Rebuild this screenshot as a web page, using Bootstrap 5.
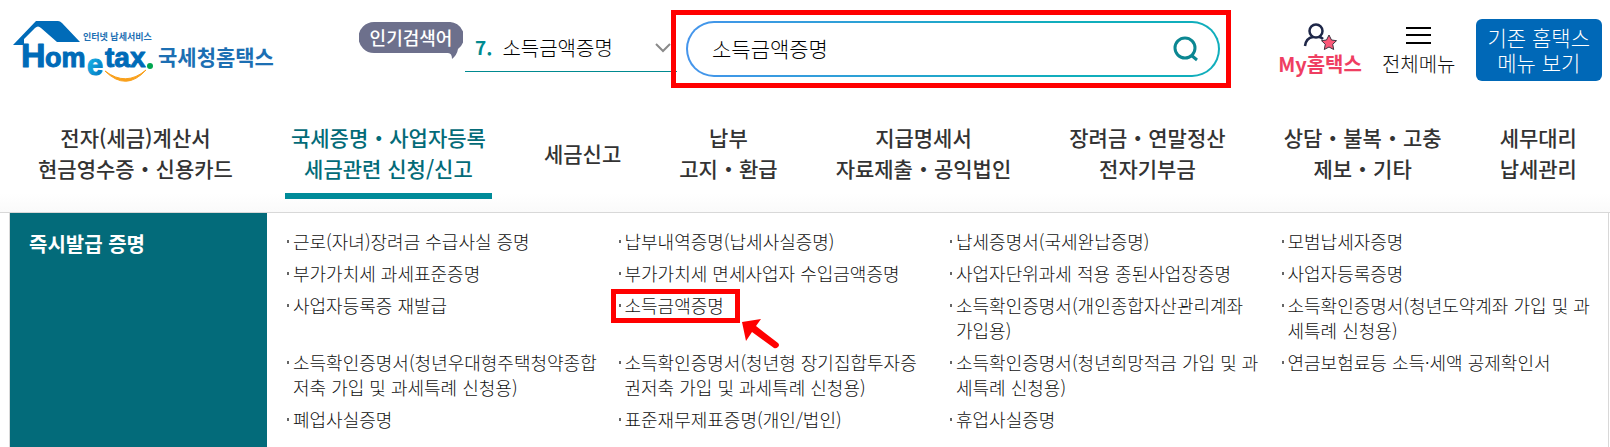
<!DOCTYPE html>
<html lang="ko">
<head>
<meta charset="utf-8">
<meta name="viewport" content="width=device-width, initial-scale=1">
<title>국세청 홈택스</title>
<link href="https://cdn.jsdelivr.net/npm/bootstrap@5.3.0/dist/css/bootstrap.min.css" rel="stylesheet">
<style>
  body { font-family: "Noto Sans CJK KR", sans-serif; color: #333; background: #fff; }
  a, a:hover { color: inherit; text-decoration: none; }

  .site-head { padding: 10px 8px 0 12px; }
  .logo { margin-right: 83px; margin-top: 8px; }
  .popular-tag { width: 104px; height: 38px; margin-top: 12px; color: #fff; font-size: 18px; line-height: 30px; font-weight: 500; text-align: center; }
  .popular-tag svg { position: absolute; inset: 0; z-index: -1; }
  .keyword { width: 212px; height: 62px; margin: 0 -6px 0 2px; padding: 14px 3px 0 10px; border: 0; border-bottom: 1px solid #008a90; background: none; font-size: 20px; font-weight: 300; color: #000; }
  .keyword b { color: #008a90; font-size: 19px; font-weight: 700; margin-right: 10px; }
  .marked { border: 5px solid #f00; }
  .search-mark { padding: 6px; padding-left: 10px; z-index: 1; min-width: 300px; }
  .search-pill { height: 56px; border: 2px solid transparent; border-radius: 28px; padding: 0 19px 0 22px;
    background: linear-gradient(#fff, #fff) padding-box, linear-gradient(90deg, #4595ec, #10aebc 70%) border-box; }
  .search-pill input { border: 0; outline: 0; background: none; font-size: 21px; font-weight: 300; color: #000; min-width: 0; }
  .search-pill button { border: 0; background: none; padding: 0; }
  .quick { font-size: 20px; line-height: 24px; margin-top: 13px; font-weight: 300; color: #111; }
  .quick svg { display: block; margin: 0 auto; }
  .my-link, .my-link:hover { color: #ef3e62; font-weight: 700; }
  .old-btn, .old-btn:hover { background: #0068b7; color: #fff; border: 0; border-radius: 6px; padding: 6px 12px; font-size: 21px; line-height: 25px; margin-top: 9px; font-weight: 300; }
  .gap-l { margin-left: 47px; }
  .gap-m { margin-left: 20px; }

  .main-menu { padding: 31px 27px 13px 32px; border-bottom: 1px solid #d8d8d8; background: linear-gradient(#fff 85%, #fafafa); font-size: 21px; line-height: 31px; font-weight: 500; }
  .main-menu a { display: flex; align-items: center; text-align: center; padding: 0 6px 6px; border-bottom: 6px solid transparent; height: 80px; white-space: nowrap; }
  .main-menu a.active { color: #036b78; border-color: #008b99; }

  .panel { margin: 0 1px 0 9px; border: 1px solid #d8d8d8; border-width: 0 1px; }
  .panel-side { width: 257px; background: #036b7a; color: #fff; font-size: 20px; line-height: 30px; padding: 16px 19px; font-weight: 700; margin: 0; }
  .cert-list { display: grid; grid-template-columns: repeat(4, 1fr); gap: 7px 20px; margin: 0; padding: 16px 15px 12px 20px; list-style: none; font-size: 18px; line-height: 25px; font-weight: 300; color: #111; }
  .cert-list li { position: relative; padding-left: 6px; word-break: break-all; }
  .cert-list li::before { content: ""; position: absolute; left: 0; top: 11px; width: 2px; height: 3px; background: #666; }
  .item-mark { position: absolute; left: -8px; top: -4px; width: 129px; height: 34px; }
  .item-arrow { position: absolute; left: 123px; top: 26px; }
</style>
</head>
<body class="min-vh-100 d-flex flex-column">
<header class="site-head d-flex align-items-start">
  <a class="logo flex-shrink-0" href="#" aria-label="홈택스">
    <svg class="d-block" width="264" height="66" viewBox="12 18 264 66">
      <defs><linearGradient id="eg" x1="0" y1="0" x2="1" y2="1"><stop offset="0" stop-color="#19c5f2"/><stop offset="1" stop-color="#006bb8"/></linearGradient></defs>
      <path d="M36 21h22q2 0 4 2l18 19H57L41 28q-3-3-6 0L24 39v6H13z" fill="#006bb8"/>
      <g font-family="'Liberation Sans',sans-serif" font-weight="700" fill="#006bb8" stroke="#006bb8" stroke-linejoin="round">
        <text x="21" y="67" font-size="34">H</text>
        <text x="45" y="67" font-size="27">om</text>
        <text x="105" y="67" font-size="28">tax</text>
        <text x="87" y="75" font-size="29" fill="url(#eg)" stroke="url(#eg)">e</text>
      </g>
      <circle cx="150" cy="66" r="3" fill="#00a650"/>
      <path d="M105 71q21 16 41-1q-20 22-41 1z" fill="#f9a01b" stroke="#f9a01b"/>
      <g font-family="'Noto Sans CJK KR',sans-serif" fill="#1c6fb3" font-weight="700">
        <text x="83" y="40" font-size="9">인터넷 납세서비스</text>
        <text x="158" y="65" font-size="21">국세청홈택스</text>
      </g>
    </svg>
  </a>
  <span class="popular-tag position-relative z-0 flex-shrink-0">
    <svg width="104" height="38" viewBox="0 0 104 38" aria-hidden="true"><path d="M15 0h74a15 15 0 0 1 10 27q-1 6-6 10q0-6-4-6H15a15 15 0 0 1 0-31z" fill="#6d708c"/></svg>
    인기검색어
  </span>
  <button class="keyword d-flex align-items-center flex-shrink-0" type="button"><b>7.</b>소득금액증명
    <svg class="ms-auto" width="20" height="12" viewBox="0 0 20 12" fill="none" stroke="#8a8a8a" stroke-width="2" aria-hidden="true"><path d="M2 2l7 7 7-7"/></svg>
  </button>
  <div class="marked search-mark flex-grow-1 position-relative">
    <form class="search-pill d-flex align-items-center" role="search">
      <input class="flex-grow-1" type="text" value="소득금액증명" aria-label="검색어">
      <button type="submit" aria-label="검색"><svg class="d-block" width="28" height="28" viewBox="0 0 28 28" fill="none" stroke="#0b8792" stroke-width="3"><circle cx="14" cy="13" r="10"/><path d="M20 20l6 5"/></svg></button>
    </form>
  </div>
  <a class="quick my-link gap-l text-center flex-shrink-0" href="#">
    <svg width="34" height="29" viewBox="0 0 34 29" fill="none"><g stroke="#1e2748" stroke-width="2.500"><circle cx="13" cy="8" r="6.500"/><path d="M2 23q1-8 8-9M16 14q2 0 4 2"/></g><path d="M26 12l2.500 5 5 .700-3.800 3.600 1 5.200-4.700-2.500-4.700 2.500 1-5.200-3.800-3.600 5-.700z" fill="#fb5878" stroke="#3e3340"/></svg>
    My홈택스</a>
  <a class="quick gap-m text-center flex-shrink-0" href="#">
    <svg width="25" height="29" viewBox="0 0 25 29" stroke="#000" stroke-width="2"><path d="M0 5h25M0 12h25M0 20h25"/></svg>
    전체메뉴</a>
  <button class="btn old-btn gap-m flex-shrink-0" type="button">기존 홈택스<br>메뉴 보기</button>
</header>

<nav class="main-menu d-flex justify-content-between">
  <a href="#">전자(세금)계산서<br>현금영수증・신용카드</a>
  <a href="#" class="active">국세증명・사업자등록<br>세금관련 신청/신고</a>
  <a href="#">세금신고</a>
  <a href="#">납부<br>고지・환급</a>
  <a href="#">지급명세서<br>자료제출・공익법인</a>
  <a href="#">장려금・연말정산<br>전자기부금</a>
  <a href="#">상담・불복・고충<br>제보・기타</a>
  <a href="#">세무대리<br>납세관리</a>
</nav>

<main class="panel d-flex flex-grow-1">
  <h2 class="panel-side flex-shrink-0">즉시발급 증명</h2>
  <ul class="cert-list flex-grow-1 align-content-start">
    <li><a href="#">근로(자녀)장려금 수급사실 증명</a></li>
    <li><a href="#">납부내역증명(납세사실증명)</a></li>
    <li><a href="#">납세증명서(국세완납증명)</a></li>
    <li><a href="#">모범납세자증명</a></li>
    <li><a href="#">부가가치세 과세표준증명</a></li>
    <li><a href="#">부가가치세 면세사업자 수입금액증명</a></li>
    <li><a href="#">사업자단위과세 적용 종된사업장증명</a></li>
    <li><a href="#">사업자등록증명</a></li>
    <li><a href="#">사업자등록증 재발급</a></li>
    <li><a href="#">소득금액증명</a>
      <span class="marked item-mark"></span>
      <svg class="item-arrow" width="40" height="32" viewBox="0 0 40 32" aria-hidden="true"><path d="M0 3l19-3-5 7 22 17q2 2 0 4t-4 1L10 13l-6 9z" fill="#f00"/></svg>
    </li>
    <li><a href="#">소득확인증명서(개인종합자산관리계좌 가입용)</a></li>
    <li><a href="#">소득확인증명서(청년도약계좌 가입 및 과세특례 신청용)</a></li>
    <li><a href="#">소득확인증명서(청년우대형주택청약종합저축 가입 및 과세특례 신청용)</a></li>
    <li><a href="#">소득확인증명서(청년형 장기집합투자증권저축 가입 및 과세특례 신청용)</a></li>
    <li><a href="#">소득확인증명서(청년희망적금 가입 및 과세특례 신청용)</a></li>
    <li><a href="#">연금보험료등 소득·세액 공제확인서</a></li>
    <li><a href="#">폐업사실증명</a></li>
    <li><a href="#">표준재무제표증명(개인/법인)</a></li>
    <li><a href="#">휴업사실증명</a></li>
  </ul>
</main>
<script src="https://cdn.jsdelivr.net/npm/bootstrap@5.3.0/dist/js/bootstrap.bundle.min.js"></script>
</body>
</html>
